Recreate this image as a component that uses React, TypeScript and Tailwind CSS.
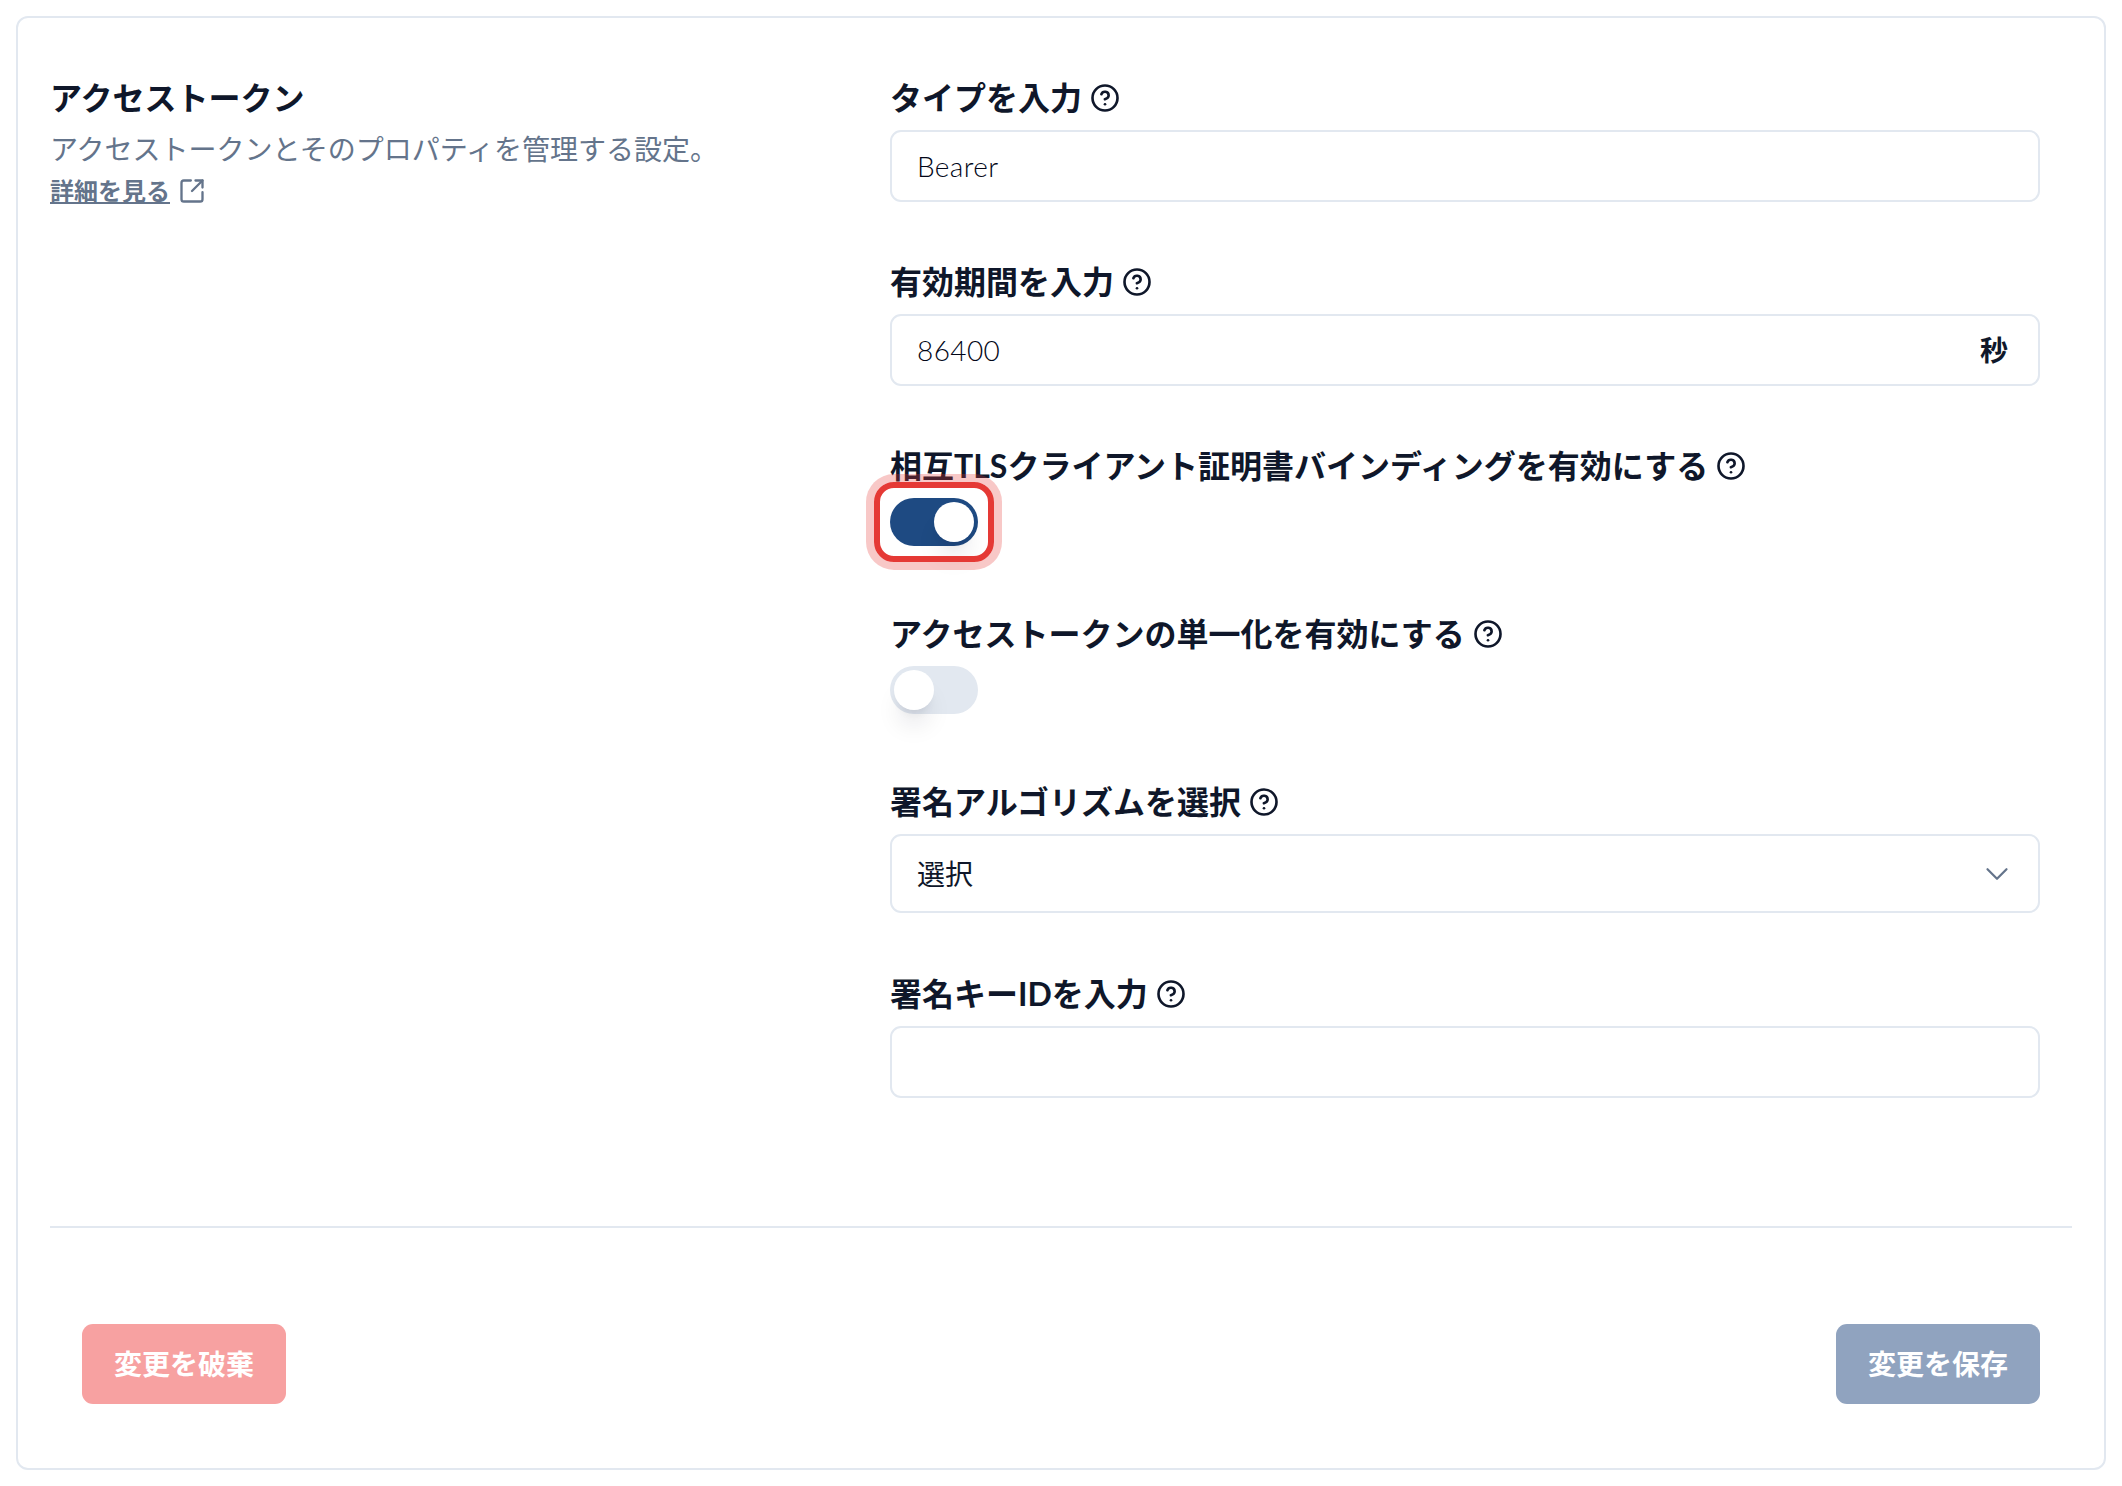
import React from "react";
import { ChevronDown, CircleHelp, SquareArrowOutUpRight } from "lucide-react";

const FONT = "font-['Lato','Noto_Sans_CJK_JP',sans-serif]";

const Label = ({ text }: { text: string }) => (
  <div className="flex h-[44px] items-center gap-[8px] pt-[2px] text-[32px] font-bold text-[#0f172a]">
    <span>{text}</span>
    <CircleHelp size={30} strokeWidth={2.1} className="shrink-0" />
  </div>
);

const TextField = ({ value, suffix }: { value?: string; suffix?: string }) => (
  <div className="mt-[11px] flex h-[72px] items-center rounded-[11px] border-2 border-[#e2e8f0] bg-white pl-[25px] pr-[30px]">
    <input
      readOnly
      value={value ?? ""}
      className="w-full bg-transparent text-[28px] font-light tracking-[0.4px] text-[#020617] outline-none"
    />
    {suffix && <span className="shrink-0 text-[28px] font-bold text-[#0f172a]">{suffix}</span>}
  </div>
);

const Toggle = ({ on, focused }: { on?: boolean; focused?: boolean }) => (
  <div className="mt-[11px] h-[55px]">
    <div
      className={`relative flex h-[48px] w-[88px] items-center rounded-full p-[4px] ${
        on ? "justify-end bg-[#1e4a82]" : "justify-start bg-[#e2e8f0]"
      }`}
    >
      <div className="h-[40px] w-[40px] rounded-full bg-white shadow-[0_20px_25px_-5px_rgba(15,23,42,0.1),0_8px_10px_-6px_rgba(15,23,42,0.1)]" />
      {focused && (
        <div className="absolute -inset-[16px] rounded-[20px] border-[6px] border-[#e53935] shadow-[0_0_0_8px_rgba(229,57,53,0.28)]" />
      )}
    </div>
  </div>
);

export default function App() {
  return (
    <div className={`min-h-[1486px] bg-white p-4 ${FONT}`}>
      <div className="h-[1454px] rounded-[12px] border-2 border-[#e2e8f0] bg-white pl-[32px] pr-[32px] pt-[57px]">
        <div className="flex">
          {/* 左カラム */}
          <div className="w-[840px]">
            <h2 className="h-[44px] text-[32px] leading-[46px] font-bold text-[#0f172a]">アクセストークン</h2>
            <p className="mt-[10px] text-[28px] leading-[40px] text-[#64748b]">
              アクセストークンとそのプロパティを管理する設定。
            </p>
            <a className="flex h-[44px] items-center gap-[8px] text-[24px] font-bold text-[#64748b]">
              <span className="underline">詳細を見る</span>
              <SquareArrowOutUpRight size={28} strokeWidth={2} />
            </a>
          </div>

          {/* 右カラム */}
          <div className="w-[1150px]">
            <Label text="タイプを入力" />
            <TextField value="Bearer" />

            <div className="mt-[57px]">
              <Label text="有効期間を入力" />
              <TextField value="86400" suffix="秒" />
            </div>

            <div className="mt-[57px]">
              <Label text="相互TLSクライアント証明書バインディングを有効にする" />
              <Toggle on focused />
            </div>

            <div className="mt-[58px]">
              <Label text="アクセストークンの単一化を有効にする" />
              <Toggle />
            </div>

            <div className="mt-[58px]">
              <Label text="署名アルゴリズムを選択" />
              <div className="mt-[11px] flex h-[79px] items-center justify-between rounded-[11px] border-2 border-[#e2e8f0] bg-white pl-[25px] pr-[22px] text-[28px] text-[#0f172a]">
                <span>選択</span>
                <ChevronDown size={38} strokeWidth={1.4} className="text-[#64748b]" />
              </div>
            </div>

            <div className="mt-[58px]">
              <Label text="署名キーIDを入力" />
              <TextField />
            </div>
          </div>
        </div>

        <div className="mt-[128px] border-t-2 border-[#e2e8f0]" />

        <div className="mt-[96px] flex justify-between px-[32px]">
          <button className="h-[80px] w-[204px] rounded-[11px] bg-[#f7a1a1] text-[28px] font-bold text-white">
            変更を破棄
          </button>
          <button className="h-[80px] w-[204px] rounded-[11px] bg-[#90a3bf] text-[28px] font-bold text-white">
            変更を保存
          </button>
        </div>
      </div>
    </div>
  );
}
